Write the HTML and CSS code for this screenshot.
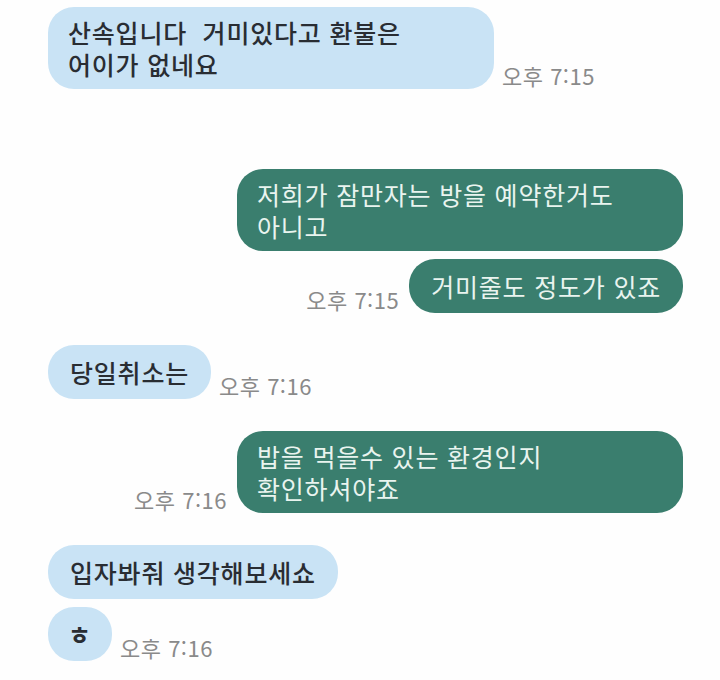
FILE: index.html
```html
<!DOCTYPE html>
<html lang="ko">
<head>
  <meta charset="UTF-8">
  <meta name="viewport" content="width=device-width, initial-scale=1.0">
  <title>채팅</title>
  <link rel="stylesheet" href="styles.css">
</head>
<body>
  <div class="chat">

    <!-- first capture -->
    <div class="row in">
      <div class="bubble wide">산속입니다&nbsp; 거미있다고 환불은<br>어이가 없네요</div>
      <span class="time">오후 7:15</span>
    </div>

    <!-- second capture -->
    <div class="row out split">
      <div class="bubble wide">저희가 잠만자는 방을 예약한거도<br>아니고</div>
    </div>

    <div class="row out tight">
      <span class="time">오후 7:15</span>
      <div class="bubble one">거미줄도 정도가 있죠</div>
    </div>

    <div class="row in">
      <div class="bubble one">당일취소는</div>
      <span class="time">오후 7:16</span>
    </div>

    <div class="row out">
      <span class="time">오후 7:16</span>
      <div class="bubble wide">밥을 먹을수 있는 환경인지<br>확인하셔야죠</div>
    </div>

    <div class="row in">
      <div class="bubble one">입자봐줘 생각해보세쇼</div>
    </div>

    <div class="row in tight">
      <div class="bubble one dot">ㅎ</div>
      <span class="time">오후 7:16</span>
    </div>

  </div>
</body>
</html>
```

FILE: styles.css
```css
body {
  margin: 0;
  padding: 0;
  background: #fefefe;
  font-family: "Noto Sans CJK KR", "Noto Sans", sans-serif;
}

.chat {
  padding: 7px 37px 0 48px;
}

.row {
  display: flex;
  align-items: flex-end;
  margin-top: 32px;
}

.row:first-child {
  margin-top: 0;
}

.row.split {
  margin-top: 80px;
}

.row.tight {
  margin-top: 8px;
}

.row.out {
  justify-content: flex-end;
}

.bubble {
  padding: 9px 20px;
  border-radius: 26px;
  font-size: 25px;
  line-height: 32px;
  letter-spacing: 0.8px;
  box-sizing: border-box;
}

.bubble.one {
  padding: 11px 22px;
}

.bubble.wide {
  width: 446px;
}

.in .bubble {
  background: #c9e3f5;
  color: #292d33;
  font-weight: 500;
}

.out .bubble {
  background: #3a7e6e;
  color: #e9f4ef;
}

.bubble.dot {
  min-width: 64px;
  text-align: center;
  font-weight: 700;
  padding-left: 12px;
  padding-right: 12px;
}

.time {
  font-size: 22px;
  line-height: 24px;
  letter-spacing: 0.5px;
  color: #8a8a8a;
  margin: 0 8px 2px;
  white-space: nowrap;
}

.in .time {
  margin-right: 0;
}

.out .time {
  margin-left: 0;
  margin-right: 10px;
}
```
